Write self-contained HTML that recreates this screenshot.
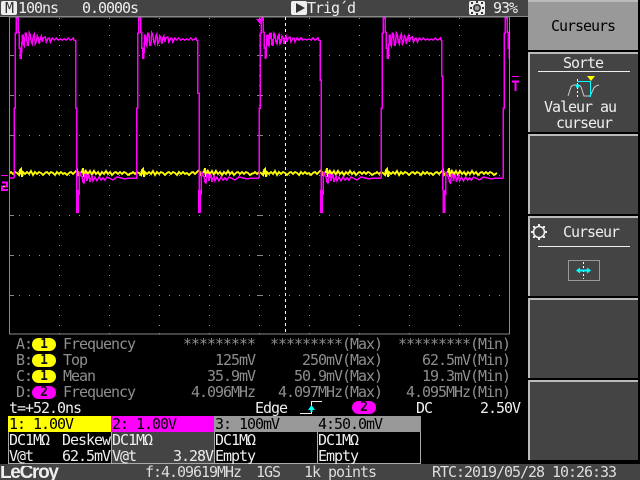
<!DOCTYPE html>
<html><head><meta charset="utf-8"><style>
html,body{margin:0;padding:0;background:#000}
#r{position:relative;width:640px;height:480px;overflow:hidden;background:#000}
.b{position:absolute}
.t{position:absolute;white-space:pre;font:15px/18px "DejaVu Sans Mono","Liberation Mono",monospace;letter-spacing:-1.03px;color:#8e8e8e}
.w{color:#eee}.k{color:#000}.l{color:#ddd}
.ov{position:absolute;width:24px;height:13px;border-radius:7px;font:bold 13px/13px "DejaVu Sans Mono",monospace;text-align:center;color:#111;background:#ff0}
.p{background:#f0f}
</style></head><body><div id="r">
<div class="b" style="left:0;top:0;width:528px;height:16px;background:#444"></div>
<div class="b" style="left:0;top:16px;width:528px;height:1px;background:#888"></div>
<div class="b" style="left:1px;top:1px;width:16px;height:14px;background:#eee;border-radius:2px"></div>
<div class="t" style="left:5px;top:-1px;color:#333">M</div>
<div class="t w" style="left:18px;top:-1px">100ns</div>
<div class="t w" style="left:82px;top:-1px">0.0000s</div>
<div class="b" style="left:291px;top:1px;width:16px;height:14px;background:#eee;border-radius:2px"></div>
<div class="t w" style="left:307px;top:-1px">Trig´d</div>
<div class="t w" style="left:493px;top:-1px">93%</div>

<svg class="b" style="left:0;top:0" width="640" height="480" viewBox="0 0 640 480">
<defs>
<clipPath id="c"><rect x="10" y="17" width="499" height="317"/></clipPath>
<polyline id="y" fill="none" stroke="#ff0" stroke-width="2" shape-rendering="crispEdges" points="9,174 11,172 13,174 15,172 17,173 19,175 20,170 21,169 22,177 23,172 25,174 27,172 29,174 31,171 33,175 35,172 37,174 39,172 41,173 43,175 45,173 47,172 49,174 51,172 53,173 55,175 57,172 59,174 61,172 63,174 65,173 67,175 69,173 71,172 73,174 75,172 77,170 78,175 80,173 82,172 83,168 84,177 86,171 88,174 90,171 92,175 94,171 96,174 98,172 100,175 102,172 104,174 106,171 108,174 110,172 112,175 114,173 116,172 118,174 120,172 122,174 124,172 126,173 128,175 131,173"/>
<g id="p" fill="none" stroke="#f0f" stroke-width="1.5" shape-rendering="crispEdges"><polyline points="-1,178 -1,108 0,108 0,33 1,33 1,18 3,18 3,32 4,32 4,48 5,48 5,58 6,58 7,35 8,35 8,44 9,46 10,33 11,33 12,45 13,45 14,33 15,35 16,42 17,44 18,36 19,34 20,44 21,42 22,36 23,38 24,44 25,38 26,36 27,42 28,38 30,37 31,42 33,38 34,38 35,42 37,38 39,40 41,38 43,40 45,39 47,40 49,39 51,40 53,38 55,40 57,39 58,38 59,41"/></g>
<g id="q" fill="none" stroke="#f0f" stroke-width="1.5" shape-rendering="crispEdges"><polyline points="0,190 0,213" stroke-width="2.5"/><polyline points="1,213 1,194 2,194 2,172 3,172 4,176 5,176 6,182 7,183 8,174 9,174 10,181 11,176 12,175 13,182 14,178 15,176 16,181 18,177 20,181 22,177 24,180 26,178 28,180 30,177 32,178 36,180 40,177 44,178 48,179 52,178 58,178 60,178"/></g>
</defs>
<g shape-rendering="crispEdges">
<g stroke="#9a9a9a" stroke-width="1" stroke-dasharray="1 9" fill="none">
<path d="M19 55.5H509M19 95.5H509M19 135.5H509M19 175.5H509M19 215.5H509M19 255.5H509M19 295.5H509"/>
<path d="M59.5 25V335M109.5 25V335M159.5 25V335M209.5 25V335M259.5 25V335M309.5 25V335M359.5 25V335M409.5 25V335M459.5 25V335"/>
</g>
<g stroke="#9a9a9a" stroke-dasharray="1 49"><path d="M59 18.5H509M59 333.5H509"/></g>
<g fill="#888"><rect x="257" y="95" width="6" height="1"/><rect x="257" y="135" width="6" height="1"/><rect x="257" y="55" width="6" height="1"/><rect x="257" y="215" width="6" height="1"/><rect x="257" y="255" width="6" height="1"/><rect x="257" y="295" width="6" height="1"/>
<rect x="10" y="95" width="4" height="1"/><rect x="10" y="135" width="4" height="1"/><rect x="10" y="55" width="4" height="1"/><rect x="10" y="215" width="4" height="1"/><rect x="10" y="255" width="4" height="1"/><rect x="10" y="295" width="4" height="1"/></g>
<rect x="9.5" y="17" width="500" height="317" fill="none" stroke="#888" stroke-width="1"/>
</g>
<g clip-path="url(#c)">
<line x1="285.5" y1="17" x2="285.5" y2="334" stroke="#fff" stroke-dasharray="3 3"/>
<use href="#y"/><use href="#y" x="122"/><use href="#y" x="244"/><use href="#y" x="366"/>
<g stroke-linejoin="miter">
<polyline points="10,178 14,178" fill="none" stroke="#f0f" stroke-width="1.5"/>
<use href="#p" x="15.3"/><use href="#p" x="137.8"/><use href="#p" x="260"/><use href="#p" x="382.4"/><use href="#p" x="504"/>
<g fill="none" stroke="#f0f" stroke-width="1.5" shape-rendering="crispEdges">
<path d="M75.5 40V108H76.7V190M197.5 40V93H199V190M320 40V80H321V190M441.5 40V76H442.7V190"/>
</g>
<use href="#q" x="77"/><use href="#q" x="199"/><use href="#q" x="321"/><use href="#q" x="443.5"/>
</g>
</g>
<polygon points="256,19 264,19 260,24" fill="#f0f"/>
<rect x="1" y="175" width="7" height="1" fill="#f0f"/>
<path d="M2 182.5H7V186.5H2V190H8" fill="none" stroke="#f0f" stroke-width="2"/>
<rect x="3" y="186" width="2" height="1" fill="#ff0"/>
<rect x="512" y="76" width="7" height="1" fill="#f0f"/>
<path d="M512 81.5H519M515.5 81V91" fill="none" stroke="#f0f" stroke-width="2"/>

<polygon points="296,3 296,13 305,8" fill="#333"/>
<rect x="469" y="1" width="16" height="14" rx="2" fill="#eee"/>
<circle cx="477" cy="8" r="4" fill="#333"/><circle cx="477" cy="8" r="2.4" fill="#999"/>
<g fill="#333"><rect x="476" y="1" width="2" height="2"/><rect x="476" y="13" width="2" height="2"/><rect x="470" y="7" width="2" height="2"/><rect x="482" y="7" width="2" height="2"/><rect x="471" y="2" width="2" height="2"/><rect x="481" y="2" width="2" height="2"/><rect x="471" y="12" width="2" height="2"/><rect x="481" y="12" width="2" height="2"/></g>

<!-- trigger icon -->
<path d="M300 413.5H311.5V401.5H322" fill="none" stroke="#eee"/>
<polygon points="311.5,405 308,410 315,410" fill="#0ff"/>
<rect x="310.5" y="409" width="2" height="3" fill="#0ff"/>
</svg>

<!-- measurements -->
<div class="t" style="left:16px;top:335px">A:</div><div class="ov" style="left:32px;top:338px">1</div><div class="t" style="left:63px;top:335px">Frequency</div>
<div class="t" style="left:16px;top:351px">B:</div><div class="ov" style="left:32px;top:354px">1</div><div class="t" style="left:63px;top:351px">Top</div>
<div class="t" style="left:16px;top:367px">C:</div><div class="ov" style="left:32px;top:370px">1</div><div class="t" style="left:63px;top:367px">Mean</div>
<div class="t" style="left:16px;top:383px">D:</div><div class="ov p" style="left:32px;top:386px">2</div><div class="t" style="left:63px;top:383px">Frequency</div>
<div class="t" style="right:385px;top:335px">*********</div><div class="t" style="right:258px;top:335px">*********(Max)</div><div class="t" style="right:130px;top:335px">*********(Min)</div>
<div class="t" style="right:385px;top:351px">125mV</div><div class="t" style="right:258px;top:351px">250mV(Max)</div><div class="t" style="right:130px;top:351px">62.5mV(Min)</div>
<div class="t" style="right:385px;top:367px">35.9mV</div><div class="t" style="right:258px;top:367px">50.9mV(Max)</div><div class="t" style="right:130px;top:367px">19.3mV(Min)</div>
<div class="t" style="right:385px;top:383px">4.096MHz</div><div class="t" style="right:258px;top:383px">4.097MHz(Max)</div><div class="t" style="right:130px;top:383px">4.095MHz(Min)</div>

<div class="t w" style="left:9px;top:399px">t=+52.0ns</div>
<div class="t w" style="left:255px;top:399px">Edge</div>
<div class="ov p" style="left:352px;top:401px">2</div>
<div class="t w" style="left:416px;top:399px">DC</div>
<div class="t w" style="left:480px;top:399px">2.50V</div>

<!-- channels -->
<div class="b" style="left:8px;top:416px;width:103px;height:16px;background:#ff0"></div>
<div class="b" style="left:111px;top:416px;width:103px;height:16px;background:#f0f"></div>
<div class="b" style="left:214px;top:416px;width:103px;height:16px;background:#999"></div>
<div class="b" style="left:317px;top:416px;width:104px;height:16px;background:#999"></div>
<div class="b" style="left:112px;top:432px;width:102px;height:31px;background:#444"></div>
<div class="b" style="left:8px;top:432px;width:1px;height:31px;background:#aaa"></div>
<div class="b" style="left:111px;top:432px;width:1px;height:31px;background:#aaa"></div>
<div class="b" style="left:214px;top:432px;width:1px;height:31px;background:#aaa"></div>
<div class="b" style="left:317px;top:432px;width:1px;height:31px;background:#aaa"></div>
<div class="b" style="left:420px;top:432px;width:1px;height:31px;background:#aaa"></div>
<div class="b" style="left:8px;top:463px;width:413px;height:1px;background:#aaa"></div>
<div class="t k" style="left:9px;top:415px">1: 1.00V</div>
<div class="t k" style="left:112px;top:415px">2: 1.00V</div>
<div class="t k" style="left:215px;top:415px">3: 100mV</div>
<div class="t k" style="left:318px;top:415px">4:50.0mV</div>
<div class="t w" style="left:9px;top:431px">DC1MΩ</div><div class="t w" style="left:62px;top:431px">Deskew</div>
<div class="t w" style="left:9px;top:447px">V@t</div><div class="t w" style="left:62px;top:447px">62.5mV</div>
<div class="t w" style="left:112px;top:431px">DC1MΩ</div>
<div class="t w" style="left:112px;top:447px">V@t</div><div class="t w" style="left:173px;top:447px">3.28V</div>
<div class="t w" style="left:215px;top:431px">DC1MΩ</div><div class="t w" style="left:215px;top:447px">Empty</div>
<div class="t w" style="left:318px;top:431px">DC1MΩ</div><div class="t w" style="left:318px;top:447px">Empty</div>

<!-- bottom bar -->
<div class="b" style="left:0;top:464px;width:640px;height:16px;background:#444"></div>
<div class="b" style="left:0;top:466px;width:60px;height:14px;overflow:hidden"><div class="b" style="left:0;top:-3px;white-space:pre;font:bold 19px/20px 'Liberation Sans',sans-serif;letter-spacing:-1.3px;color:#eee">LeCroy</div></div>
<div class="t l" style="left:145px;top:463px">f:4.09619MHz</div>
<div class="t l" style="left:256px;top:463px">1GS</div>
<div class="t l" style="left:304px;top:463px">1k points</div>
<div class="t l" style="left:432px;top:463px">RTC:2019/05/28 10:26:33</div>

<!-- right panels -->
<div class="b" style="left:528px;top:0;width:110px;height:50px;background:#999"></div>
<div class="b" style="left:528px;top:0;width:110px;height:2px;background:#bbb"></div>
<div class="b" style="left:528px;top:52px;width:110px;height:80px;background:#444"></div>
<div class="b" style="left:528px;top:134px;width:110px;height:80px;background:#444"></div>
<div class="b" style="left:528px;top:216px;width:110px;height:80px;background:#444"></div>
<div class="b" style="left:528px;top:298px;width:110px;height:80px;background:#444"></div>
<div class="b" style="left:528px;top:380px;width:110px;height:80px;background:#444"></div>
<div class="b" style="left:528px;top:52px;width:110px;height:2px;background:#bbb"></div>
<div class="b" style="left:528px;top:134px;width:110px;height:2px;background:#bbb"></div>
<div class="b" style="left:528px;top:216px;width:110px;height:2px;background:#bbb"></div>
<div class="b" style="left:528px;top:298px;width:110px;height:2px;background:#bbb"></div>
<div class="b" style="left:528px;top:380px;width:110px;height:2px;background:#bbb"></div>
<div class="b" style="left:528px;top:52px;width:2px;height:80px;background:#bbb"></div>
<div class="b" style="left:528px;top:134px;width:2px;height:80px;background:#bbb"></div>
<div class="b" style="left:528px;top:216px;width:2px;height:80px;background:#bbb"></div>
<div class="b" style="left:528px;top:298px;width:2px;height:80px;background:#bbb"></div>
<div class="b" style="left:528px;top:380px;width:2px;height:80px;background:#bbb"></div>
<div class="t k" style="left:551px;top:17px">Curseurs</div>
<div class="t w" style="left:563px;top:54px">Sorte</div>
<div class="b" style="left:538px;top:71px;width:92px;height:1px;background:#eee"></div>
<div class="t w" style="left:544px;top:98px">Valeur au</div>
<div class="t w" style="left:556px;top:114px">curseur</div>
<div class="t w" style="left:563px;top:223px">Curseur</div>
<div class="b" style="left:538px;top:246px;width:92px;height:1px;background:#eee"></div>
<div class="b" style="left:568px;top:260px;width:30px;height:19px;border:1px solid #999"></div>
<svg class="b" style="left:528px;top:0" width="112" height="300" viewBox="528 0 112 300">
<path d="M568 96L571 87Q572 85 575 85H578Q581 85 582 90L584 96H590L593 90Q594 86 599 85" fill="none" stroke="#ccc"/>
<line x1="577.5" y1="79" x2="577.5" y2="97" stroke="#fff" stroke-dasharray="2 2"/>
<path d="M577 81.5H590.5V97" fill="none" stroke="#0ff"/>
<circle cx="577.5" cy="86" r="1.8" fill="#0ff"/>
<polygon points="587,76 595,76 591,81" fill="#ff0"/>
<circle cx="539" cy="232" r="5.5" fill="none" stroke="#eee" stroke-width="1.6"/>
<g fill="#eee"><rect x="538" y="224" width="2" height="2"/><rect x="538" y="238" width="2" height="2"/><rect x="531" y="231" width="2" height="2"/><rect x="545" y="231" width="2" height="2"/><rect x="533" y="226" width="2" height="2"/><rect x="543" y="226" width="2" height="2"/><rect x="533" y="236" width="2" height="2"/><rect x="543" y="236" width="2" height="2"/></g>
<line x1="583.5" y1="262" x2="583.5" y2="279" stroke="#fff" stroke-dasharray="2 2"/>
<path d="M578 270.5H589" stroke="#0ff" stroke-width="2"/>
<polygon points="576,270.5 580,267.5 580,273.5" fill="#0ff"/><polygon points="591,270.5 587,267.5 587,273.5" fill="#0ff"/>
</svg>
</div></body></html>
